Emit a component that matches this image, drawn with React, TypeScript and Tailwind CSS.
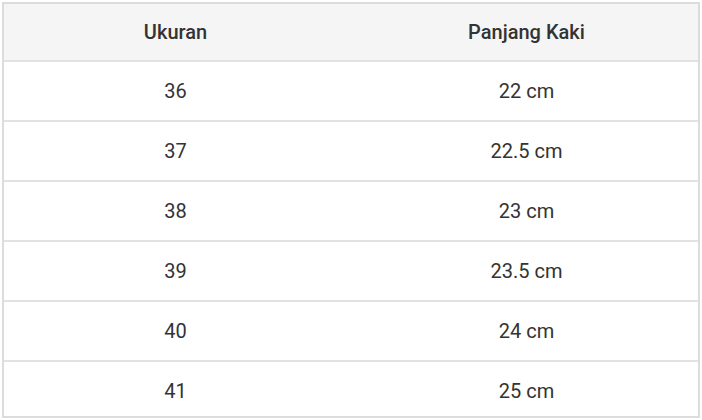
import React from "react";

const rows = [
  ["36", "22 cm"],
  ["37", "22.5 cm"],
  ["38", "23 cm"],
  ["39", "23.5 cm"],
  ["40", "24 cm"],
  ["41", "25 cm"],
];

export default function App() {
  return (
    <div className="w-[702px] h-[420px] bg-white pt-[2px] pl-[2px]" style={{ fontFamily: "Roboto, 'Liberation Sans', sans-serif" }}>
      <div className="w-[698px] h-[416px] border-2 border-[#dcdcdc] overflow-hidden text-[20px] text-[#333333]">
        <div className="grid grid-cols-2 h-[56px] bg-[#f5f5f5] font-medium items-center text-center">
          <div className="pr-[4px]">Ukuran</div>
          <div className="pl-[4px]">Panjang Kaki</div>
        </div>
        {rows.map(([a, b]) => (
          <div key={a} className="grid grid-cols-2 h-[60px] shrink-0 border-t-2 border-[#e2e2e2] items-center text-center">
            <div className="pr-[4px]">{a}</div>
            <div className="pl-[4px]">{b}</div>
          </div>
        ))}
      </div>
    </div>
  );
}
